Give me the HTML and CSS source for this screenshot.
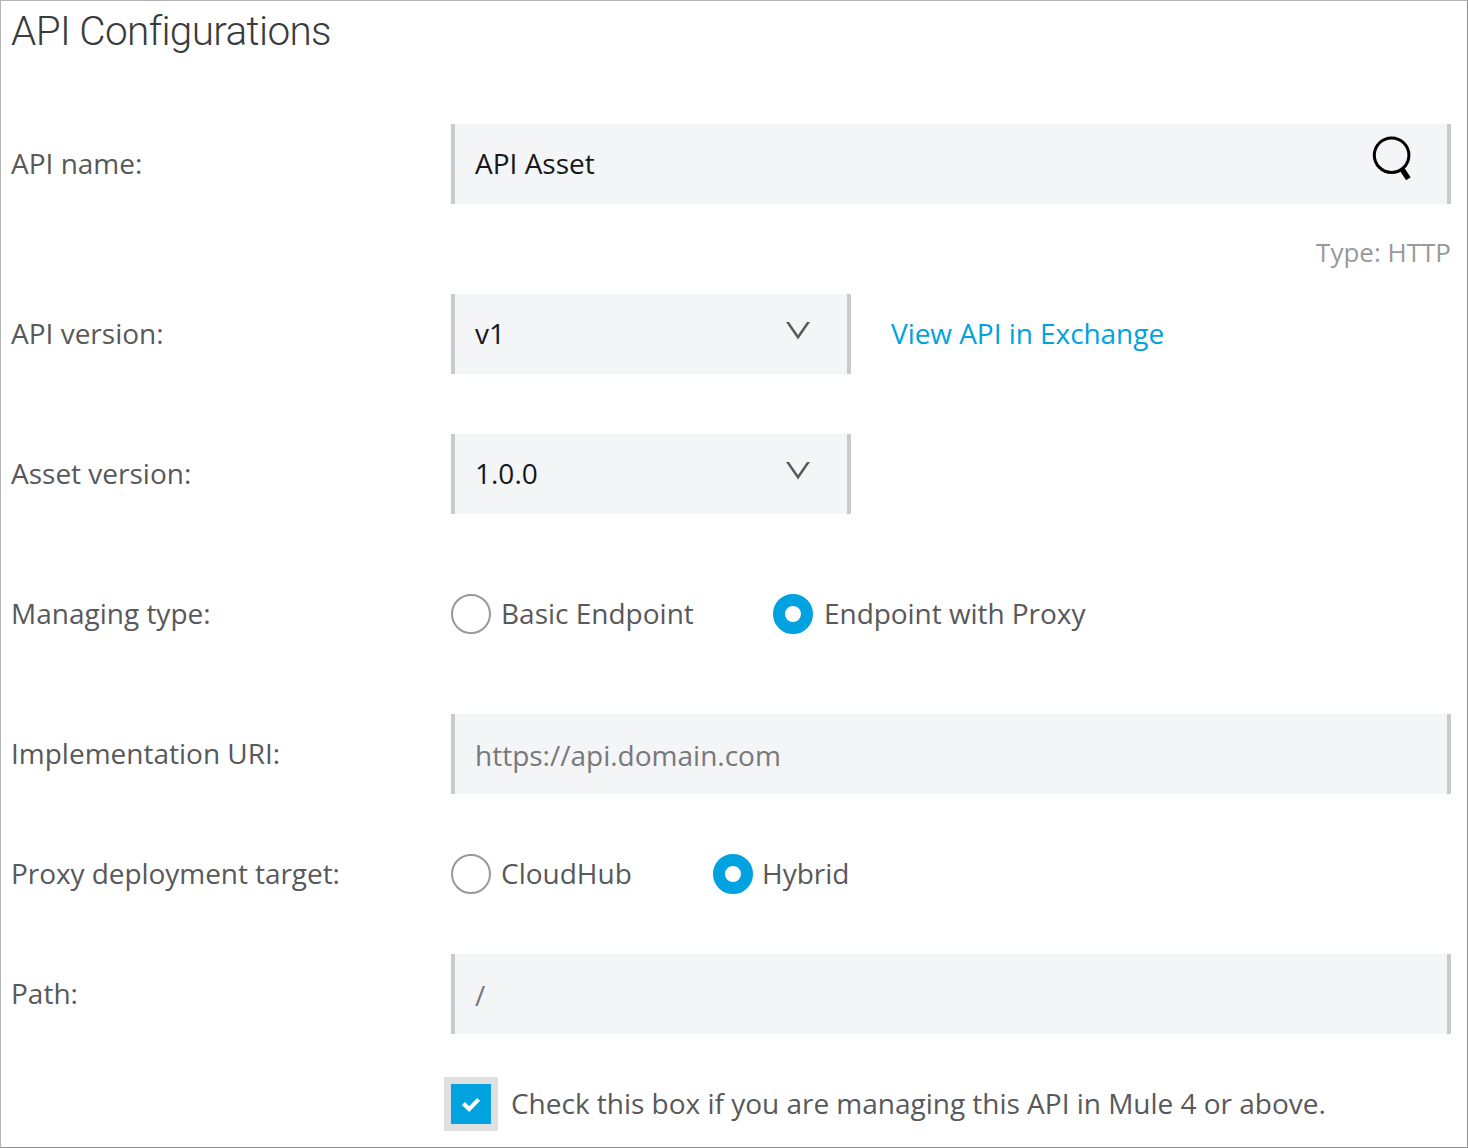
FILE: index.html
```html
<!DOCTYPE html>
<html lang="en">
<head>
<meta charset="utf-8">
<title>API Configurations</title>
<link rel="stylesheet" href="styles.css">
</head>
<body>
<main class="panel">
  <h1 class="title">API Configurations</h1>
  <form class="form">
    <div class="row">
      <span class="label">API name:</span>
      <div class="field wide">
        <span class="value">API Asset</span>
        <svg class="search" width="44" height="50" viewBox="0 0 44 50" fill="none" stroke="#000"><circle cx="21.6" cy="21.2" r="17.3" stroke-width="3"/><path d="M31.5 34.5l6.9 10.2" stroke-width="5.4"/></svg>
      </div>
    </div>
    <div class="hint">Type: HTTP</div>
    <div class="row gap-60">
      <span class="label">API version:</span>
      <div class="field select"><span class="value">v1</span><svg class="chevron" width="26" height="20" viewBox="0 0 26 20"><path d="M1 1h3l9 13 9-13h3L13 18.5z" fill="#58595a"/></svg></div>
      <a class="link">View API in Exchange</a>
    </div>
    <div class="row gap-60">
      <span class="label">Asset version:</span>
      <div class="field select"><span class="value">1.0.0</span><svg class="chevron" width="26" height="20" viewBox="0 0 26 20"><path d="M1 1h3l9 13 9-13h3L13 18.5z" fill="#58595a"/></svg></div>
    </div>
    <div class="row gap-60">
      <span class="label">Managing type:</span>
      <div class="option managing"><span class="radio"></span><span class="option-text">Basic Endpoint</span></div>
      <div class="option proxy"><span class="radio selected"></span><span class="option-text">Endpoint with Proxy</span></div>
    </div>
    <div class="row gap-40">
      <span class="label">Implementation URI:</span>
      <div class="field wide"><span class="placeholder">https://api.domain.com</span></div>
    </div>
    <div class="row gap-40">
      <span class="label target-label">Proxy deployment target:</span>
      <div class="option target"><span class="radio"></span><span class="option-text">CloudHub</span></div>
      <div class="option hybrid"><span class="radio selected"></span><span class="option-text">Hybrid</span></div>
    </div>
    <div class="row">
      <span class="label">Path:</span>
      <div class="field wide"><span class="placeholder">/</span></div>
    </div>
    <div class="confirm">
      <span class="checkbox"><svg width="20" height="18" viewBox="0 0 20 18"><path d="M2.4 8.6l5.7 5.5L17.6 4.4" fill="none" stroke="#fff" stroke-width="4.2"/></svg></span>
      <span class="confirm-text">Check this box if you are managing this API in Mule 4 or above.</span>
    </div>
  </form>
</main>
</body>
</html>
```
FILE: styles.css
```css
* { box-sizing: border-box; }
body {
  margin: 0;
  background: #fff;
  color: #58595a;
  font: 28px/40px "Open Sans", "Noto Sans", sans-serif;
}
.panel {
  width: 1468px;
  height: 1148px;
  padding: 0 16px 0 10px;
  border: 1px solid #b3b3b3;
  border-right-color: #909090;
  border-bottom-color: #909090;
  overflow: hidden;
}
.title {
  height: 123px;
  margin: 0;
  padding-top: 5px;
  color: #3a3b3c;
  font: 300 40.5px/50px Roboto, sans-serif;
  letter-spacing: -0.65px;
  white-space: nowrap;
}
.form { display: flex; flex-direction: column; }
.row { display: flex; align-items: center; height: 80px; }
.gap-60 { margin-bottom: 60px; }
.gap-40 { margin-bottom: 40px; }
.label { flex: 0 0 440px; }
.label, .value, .link, .option-text, .confirm-text { padding-bottom: 2px; }
.target-label { letter-spacing: -0.06px; }
.field {
  display: flex;
  align-items: center;
  justify-content: space-between;
  height: 80px;
  padding: 0 20px;
  border: solid #c9cacb;
  border-width: 0 4px;
  background: #f4f5f7;
}
.wide { width: 1000px; }
.select { width: 400px; padding-right: 36px; }
.value { color: #17181a; }
.placeholder { color: #77787a; padding-top: 2px; }
.search { margin: 0 13px 10px 0; }
.chevron { margin-bottom: 6px; }
.hint {
  height: 90px;
  padding-top: 28px;
  color: #999;
  font-size: 26px;
  text-align: right;
}
.link { margin-left: 40px; color: #00a2df; letter-spacing: -0.05px; }
.option { display: flex; align-items: center; gap: 10px; }
.managing { width: 322px; }
.proxy { gap: 11px; letter-spacing: -0.05px; }
.target { width: 262px; }
.hybrid { gap: 9px; }
.radio {
  width: 40px;
  height: 40px;
  border: 2px solid #999;
  border-radius: 50%;
}
.selected { border: 12px solid #00a2df; }
.confirm {
  display: flex;
  align-items: center;
  gap: 13px;
  height: 54px;
  margin: 43px 0 0 433px;
}
.confirm-text { letter-spacing: -0.015px; }
.checkbox {
  display: flex;
  align-items: center;
  justify-content: center;
  width: 54px;
  height: 54px;
  border: 7px solid #e0e0e0;
  background: #00a2df;
}
```
